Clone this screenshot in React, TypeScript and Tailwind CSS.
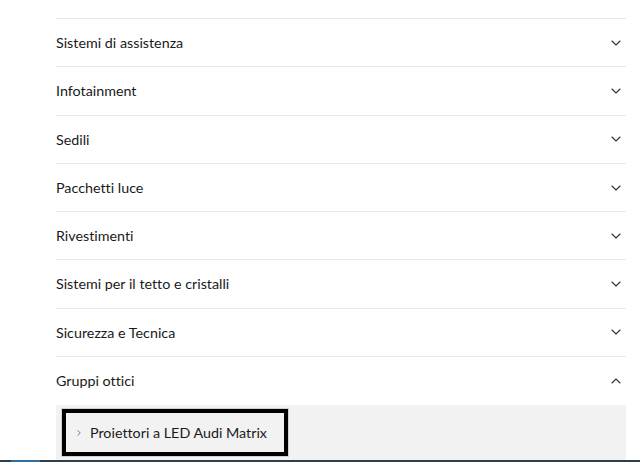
import { ChevronDown, ChevronUp, ChevronRight } from "lucide-react";

const items = [
  "Sistemi di assistenza",
  "Infotainment",
  "Sedili",
  "Pacchetti luce",
  "Rivestimenti",
  "Sistemi per il tetto e cristalli",
  "Sicurezza e Tecnica",
];

export default function App() {
  return (
    <div className="w-[640px] h-[473px] bg-white overflow-hidden text-[#1a1a1a] [font-variant-ligatures:none]" style={{ fontFamily: "Lato, 'Open Sans', sans-serif" }}>
      <div className="pt-[18px] pl-[56px] pr-[14px]">
        <div className="border-t border-[#e8e8e8]">
          {items.map((label) => (
            <div key={label} className="h-[48.3px] flex items-center justify-between border-b border-[#e8e8e8]">
              <span className="text-[14.3px]">{label}</span>
              <ChevronDown className="w-4 h-4 mr-[2px] text-[#333]" strokeWidth={1.6} />
            </div>
          ))}
          <div className="h-[48px] flex items-center justify-between">
            <span className="text-[14.3px]">Gruppi ottici</span>
            <ChevronUp className="w-4 h-4 mr-[2px] text-[#333]" strokeWidth={1.6} />
          </div>
          <div className="bg-[#f2f2f2] h-[55px] pt-[4px] pl-[6px]">
            <div className="w-[226px] h-[47px] border-[4px] border-black outline outline-1 outline-[#d0d0d0] flex items-center pl-[8px] gap-[6px]">
              <ChevronRight className="w-[10px] h-[10px] text-[#666]" strokeWidth={2} />
              <span className="text-[14.3px]">Proiettori a LED Audi Matrix</span>
            </div>
          </div>
        </div>
      </div>
      <div className="h-[2px] bg-[#2e3f4c] flex">
        <div className="ml-[11px] w-[29px] bg-[#2f6ea3]" />
      </div>
    </div>
  );
}
